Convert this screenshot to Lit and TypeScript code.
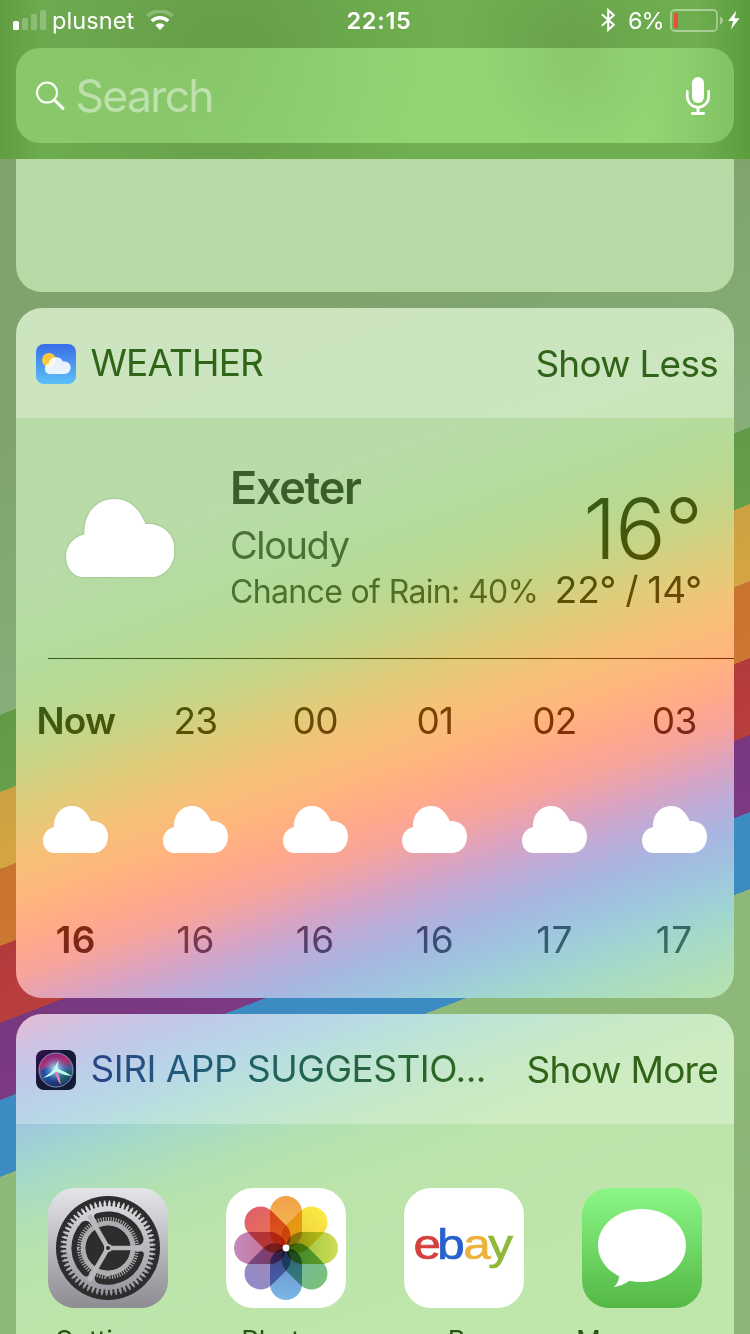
import { LitElement, html, css, svg } from 'lit';
import { customElement, property } from 'lit/decorators.js';
import { classMap } from 'lit/directives/class-map.js';

const HOURS = [
	{ hour: 'Now', temp: '16' },
	{ hour: '23', temp: '16' },
	{ hour: '00', temp: '16' },
	{ hour: '01', temp: '16' },
	{ hour: '02', temp: '17' },
	{ hour: '03', temp: '17' },
];

const PETALS = [
	['#f2a04a', '#f2c455'],
	['#fbe943', '#ecc83c'],
	['#cfdd57', '#8fb83a'],
	['#7cc07a', '#6fb5a8'],
	['#7ab8e6', '#6688c4'],
	['#8f8cc8', '#a986b4'],
	['#c28ac0', '#cf6a7c'],
	['#e2606a', '#e87a4c'],
];

const cloud = html`
	<svg class="cloud" viewBox="0 0 108.6 78.4">
		<path fill="#fff" d="M18.5 78.4C8 78.4 0 69.5 0 57.5C0 46.5 8 37.5 18.4 35.2C17.6 15 30 0 48.5 0C64 0 73.5 10.5 79.6 25C96 23.6 108.6 34.5 108.6 51C108.6 67 98 78.4 84 78.4Z"/>
	</svg>
`;

@customElement('status-bar')
class StatusBar extends LitElement {

	render() {
		return html`
			<div class="side">
				<svg class="signal" width="34" height="20" viewBox="0 0 34 20" fill="#fff">
					<rect x="0" y="11" width="6" height="9" rx="1.5"/>
					<g opacity=".24">
						<rect x="9" y="8" width="6" height="12" rx="1.5"/>
						<rect x="18" y="4" width="6" height="16" rx="1.5"/>
						<rect x="27" y="0" width="6" height="20" rx="1.5"/>
					</g>
				</svg>
				<span class="carrier">plusnet</span>
				<svg width="28" height="20" viewBox="0 0 28 20" fill="none" stroke="#fff">
					<path d="M1.4 6.2a18 18 0 0 1 25.2 0" stroke-width="3.8" opacity=".24"/>
					<path d="M5.8 11a11.8 11.8 0 0 1 16.4 0" stroke-width="3.6"/>
					<path d="M14 20l-4.6-4.8a6.6 6.6 0 0 1 9.2 0z" fill="#fff" stroke="none"/>
				</svg>
			</div>
			<span class="time">22:15</span>
			<div class="side right">
				<svg width="14" height="24" viewBox="0 0 14 24" fill="none" stroke="#fff" stroke-width="2">
					<path d="M.8 6.2l12 10.6L7.2 22V2l5.6 5.2L.8 17.8"/>
				</svg>
				<span class="percent">6%</span>
				<svg class="battery" width="53" height="23" viewBox="0 0 53 23">
					<rect x="1" y="1" width="46" height="21" rx="4" fill="none" stroke="#fff" stroke-width="1.8" opacity=".42"/>
					<path d="M50 7.4q3 1.2 3 4.1t-3 4.1z" fill="#fff" opacity=".42"/>
					<rect x="4" y="4" width="4" height="15" rx=".8" fill="#f04b3c"/>
				</svg>
				<svg width="12" height="20" viewBox="0 0 12 20" fill="#fff">
					<path d="M8.4 .4L.2 11h4.9L2.9 19.6L11.6 8.3H6.5z"/>
				</svg>
			</div>
		`;
	}

	static get styles() {
		return css`
			:host {
				display: grid;
				grid-template-columns: 1fr auto 1fr;
				align-items: center;
				height: 40px;
				padding: 0 10px 0 13px;
				color: #fff;
				font-size: 23.5px;
				line-height: 38px;
			}
			.side {
				display: flex;
				align-items: center;
			}
			.right {
				justify-content: flex-end;
			}
			.carrier {
				margin: 0 12px 0 5px;
				padding-top: 2px;
				letter-spacing: 0.1px;
			}
			.time {
				padding: 2px 0 0 5px;
				font-weight: 600;
				letter-spacing: 0.7px;
			}
			.percent {
				margin: 0 6.5px 0 13.5px;
				padding-top: 2px;
				letter-spacing: -1.1px;
			}
			.battery {
				margin: 1px 5px 0 0;
			}
		`;
	}
}

@customElement('search-field')
class SearchField extends LitElement {

	render() {
		return html`
			<svg width="30" height="30" viewBox="0 0 30 30" fill="none" stroke="#fff">
				<circle cx="11" cy="11.6" r="10" stroke-width="2"/>
				<path d="M18.2 18.8L27 27.4" stroke-width="3" stroke-linecap="round"/>
			</svg>
			<span class="placeholder">Search</span>
			<svg width="24" height="38" viewBox="0 0 24 38" fill="none" stroke="#fff">
				<rect x="6" y="0" width="12" height="26" rx="6" fill="#fff" stroke="none"/>
				<path d="M1.3 14.4v5.2a10.7 10.7 0 0 0 21.4 0v-5.2" stroke-width="2.6" stroke-linecap="round"/>
				<path d="M12 30v5" stroke-width="3"/>
				<path d="M6.4 36.5h11.2" stroke-width="2.8" stroke-linecap="round"/>
			</svg>
		`;
	}

	static get styles() {
		return css`
			:host {
				display: flex;
				align-items: center;
				height: 95px;
				box-sizing: border-box;
				padding: 0 24px 0 20px;
				border-radius: 24px;
				background:
					radial-gradient(circle at 170px -10px, rgba(120, 176, 90, 0.35), transparent 260px),
					radial-gradient(circle at 560px 10px, rgba(130, 186, 96, 0.5), transparent 100px),
					linear-gradient(90deg, #8acb6c, #92d674 50%, #92d674 88%, #82c364);
			}
			.placeholder {
				flex: 1;
				margin-left: 9.5px;
				font-size: 44.5px;
				line-height: 60px;
				letter-spacing: -1.7px;
				color: rgba(255, 255, 255, 0.45);
			}
		`;
	}
}

@customElement('widget-card')
class WidgetCard extends LitElement {
	@property() heading = '';
	@property() action = '';

	render() {
		return html`
			<div class="header">
				<slot name="icon"></slot>
				<span class="heading"><slot name="heading">${this.heading}</slot></span>
				<span class="action">${this.action}</span>
			</div>
			<slot></slot>
		`;
	}

	static get styles() {
		return css`
			:host {
				display: block;
				margin: 0 16px 16px;
				border-radius: 26px;
				overflow: hidden;
				background: var(--glass) fixed;
			}
			.header {
				display: flex;
				align-items: center;
				height: 110px;
				box-sizing: border-box;
				padding: 2px 16px 0 20px;
				background: rgba(255, 255, 255, 0.28);
				color: #2f6419;
				font-size: 37px;
				line-height: 50px;
				white-space: nowrap;
			}
			.heading {
				flex: 1;
				margin: -2px 0 0 14.5px;
				letter-spacing: -0.85px;
			}
			.action {
				letter-spacing: -0.75px;
			}
		`;
	}
}

@customElement('weather-report')
class WeatherReport extends LitElement {

	render() {
		return html`
			<div class="current">
				${cloud}
				<div class="details">
					<div class="city">Exeter</div>
					<div class="condition">Cloudy</div>
					<div class="rain">Chance of Rain: 40%</div>
				</div>
				<div class="temps">
					<div class="now">16°</div>
					<div class="range">22° / 14°</div>
				</div>
			</div>
			<div class="divider"></div>
			<div class="hours">
				${HOURS.map((h, i) => html`
					<div class=${classMap({ hour: true, bold: i === 0 })}>
						<span class="label">${h.hour}</span>
						${cloud}
						<span class="temp">${h.temp}</span>
					</div>
				`)}
			</div>
		`;
	}

	static get styles() {
		return css`
			:host {
				display: block;
				height: 580px;
			}
			.current {
				display: flex;
				height: 240px;
				box-sizing: border-box;
				padding: 40px 32px 0 49.6px;
				white-space: nowrap;
			}
			.current .cloud {
				width: 108.6px;
				height: 78.4px;
				margin-top: 40.5px;
				filter: drop-shadow(0 0 1px rgba(60, 110, 60, 0.35));
			}
			.details {
				margin-left: 55.8px;
			}
			/* text is subtracted from whatever colour lies behind it */
			.city, .condition, .rain, .now, .range, .divider, .label, .temp {
				mix-blend-mode: difference;
				color: #7e7e7e;
			}
			.city {
				font-size: 45px;
				font-weight: 600;
				line-height: 60px;
				letter-spacing: -1.3px;
			}
			.condition {
				font-size: 38px;
				line-height: 55px;
				letter-spacing: -1.4px;
				color: #6b6b6b;
			}
			.rain {
				font-size: 32px;
				line-height: 38px;
				letter-spacing: -0.65px;
				color: #6b6b6b;
			}
			.temps {
				margin: 27.5px 0 0 auto;
				text-align: right;
			}
			.now {
				font-size: 84px;
				font-weight: 280;
				line-height: 86px;
				letter-spacing: -1px;
			}
			.range {
				font-size: 37px;
				line-height: 36px;
				letter-spacing: -0.1px;
				word-spacing: -1.5px;
			}
			.divider {
				height: 1px;
				margin-left: 32px;
				background: #7e7e7e;
			}
			.hours {
				display: grid;
				grid-template-columns: repeat(6, 1fr);
				padding-top: 37px;
			}
			.hour {
				display: flex;
				flex-direction: column;
				align-items: center;
				gap: 60px;
				font-size: 37px;
				line-height: 50px;
				letter-spacing: -0.8px;
			}
			.hour .cloud {
				width: 65px;
				height: 47px;
			}
			.bold {
				font-weight: 600;
			}
			.temp {
				margin-top: 2px;
				color: #6b6b6b;
				letter-spacing: 0.3px;
			}
			.bold .temp {
				color: #7e7e7e;
			}
		`;
	}
}

const settingsIcon = svg`
	<rect width="120" height="120" fill="url(#metal)"/>
	<circle cx="60" cy="60" r="52" fill="#2d2d2d"/>
	<g fill="none" stroke="url(#metal)">
		<circle cx="60" cy="60" r="43" stroke-width="5" pathLength="120" stroke-dasharray="1.2 .8"/>
		<circle cx="60" cy="60" r="45" stroke-width="5" pathLength="120" stroke-dasharray=".7 1.3" stroke-dashoffset="-.25"/>
	</g>
	<circle cx="60" cy="60" r="42" fill="url(#metal)"/>
	${[0, 120, 240].map(a => svg`
		<g transform="rotate(${a} 60 60)">
			<path fill="#2d2d2d" d="M95.8 67.6A37 37 0 0 1 51.2 95.8Q46.4 94 46.8 89.2L60 60L91.4 63.4Q96.4 62.6 95.8 67.6Z"/>
		</g>
	`)}
	<g fill="none" stroke="#aeaeb2">
		<circle cx="60" cy="60" r="28.6" stroke-width="5" pathLength="144" stroke-dasharray=".9 1.1"/>
		<circle cx="60" cy="60" r="24.8" stroke-width="5"/>
	</g>
	<circle cx="60" cy="60" r="22.4" fill="#2d2d2d"/>
	${[0, 120, 240].map(a => svg`
		<path d="M60 60H98" transform="rotate(${a} 60 60)" stroke="#b9b9bd" stroke-width="4.6"/>
	`)}
	<circle cx="60" cy="60" r="4" fill="#b9b9bd"/>
	<circle cx="60" cy="60" r="2" fill="#2d2d2d"/>
	<defs>
		<linearGradient id="metal" gradientUnits="userSpaceOnUse" x1="0" y1="0" x2="0" y2="120">
			<stop offset="0" stop-color="#e5e4e9"/>
			<stop offset="1" stop-color="#8d8c92"/>
		</linearGradient>
	</defs>
`;

const photosIcon = svg`
	<rect width="120" height="120" fill="#fff"/>
	<defs>
		${PETALS.map(([outer, inner], i) => svg`
			<linearGradient id="petal${i}" x1="0" y1="0" x2="0" y2="1">
				<stop offset="0" stop-color=${outer}/>
				<stop offset="1" stop-color=${inner}/>
			</linearGradient>
		`)}
	</defs>
	${PETALS.map((_, i) => svg`
		<rect class="petal" x="44" y="8" width="32" height="52" rx="16" fill="url(#petal${i})" transform="rotate(${i * 45} 60 60)"/>
	`)}
	<circle cx="60" cy="60" r="3.4" fill="#fff"/>
`;

const ebayIcon = svg`
	<rect width="120" height="120" fill="#fff"/>
	<g class="ebay" transform="translate(9.4 71.2) scale(1.15 1)">
		<text x="0" fill="#d5403e" stroke="#d5403e">e</text>
		<text x="20.8" fill="#2861cc" stroke="#2861cc">b</text>
		<text x="43.4" fill="#edb23c" stroke="#edb23c">a</text>
		<text x="65.2" fill="#90b83a" stroke="#90b83a">y</text>
	</g>
`;

const messagesIcon = svg`
	<rect width="120" height="120" fill="url(#green)"/>
	<path fill="#fff" d="M60 21C84.4 21 104 37.2 104 57.4S84.4 94 60 94Q53 94 47.2 92.8Q40 98.4 31.6 99Q37 94.8 37 88.2C24 81.6 16 70.4 16 57.4C16 37.2 35.6 21 60 21Z"/>
	<defs>
		<linearGradient id="green" x1="0" y1="0" x2="0" y2="1">
			<stop offset="0" stop-color="#8bf787"/>
			<stop offset="1" stop-color="#54b844"/>
		</linearGradient>
	</defs>
`;

const APPS = [
	{ name: 'Settings', icon: settingsIcon },
	{ name: 'Photos', icon: photosIcon },
	{ name: 'eBay', icon: ebayIcon },
	{ name: 'Messages', icon: messagesIcon },
];

@customElement('app-suggestions')
class AppSuggestions extends LitElement {

	render() {
		return APPS.map(app => html`
			<div class="app">
				<svg class="icon" viewBox="0 0 120 120">${app.icon}</svg>
				<span class="name">${app.name}</span>
			</div>
		`);
	}

	static get styles() {
		return css`
			:host {
				display: flex;
				justify-content: space-between;
				height: 300px;
				box-sizing: border-box;
				padding: 64px 32px 0;
			}
			.app {
				display: flex;
				flex-direction: column;
				align-items: center;
				width: 120px;
			}
			.icon {
				flex: none;
				width: 120px;
				height: 120px;
				border-radius: 27px;
				isolation: isolate;
			}
			.petal {
				mix-blend-mode: multiply;
			}
			.ebay {
				font: 43px "Liberation Sans", Arial, sans-serif;
				stroke-width: 0.7px;
			}
			.name {
				margin-top: 12px;
				font-size: 27.4px;
				line-height: 40px;
				color: #2c5218;
				white-space: nowrap;
			}
		`;
	}
}

@customElement('app-root')
class AppRoot extends LitElement {

	render() {
		return html`
			<div class="top">
				<status-bar></status-bar>
				<search-field></search-field>
			</div>
			<div class="previous"></div>
			<widget-card heading="WEATHER" action="Show Less">
				<svg slot="icon" class="badge" viewBox="0 0 40 40">
					<defs>
						<linearGradient id="sky" x1="0" y1="0" x2="0" y2="1">
							<stop offset="0" stop-color="#3a6ee8"/>
							<stop offset="1" stop-color="#5cc0f8"/>
						</linearGradient>
					</defs>
					<rect width="40" height="40" fill="url(#sky)"/>
					<circle cx="13" cy="16" r="7" fill="#fcc93c"/>
					<path fill="#fff" fill-opacity=".87" d="M14 30A5.2 5.2 0 0 1 12.6 19.8A7.6 7.6 0 0 1 27 17.6A6.3 6.3 0 1 1 29 30Z"/>
				</svg>
				<weather-report></weather-report>
			</widget-card>
			<widget-card action="Show More">
				<svg slot="icon" class="badge" viewBox="0 0 40 40">
					<defs>
						<linearGradient id="night" x1="0" y1="0" x2="1" y2="1">
							<stop offset="0" stop-color="#32104e"/>
							<stop offset=".5" stop-color="#151a33"/>
							<stop offset="1" stop-color="#101c38"/>
						</linearGradient>
						<linearGradient id="orb" x1=".3" y1="0" x2=".5" y2="1">
							<stop offset="0" stop-color="#7d2a86"/>
							<stop offset=".3" stop-color="#b92b6c"/>
							<stop offset=".55" stop-color="#3b5d9b"/>
							<stop offset="1" stop-color="#172b66"/>
						</linearGradient>
						<radialGradient id="glow">
							<stop offset="0" stop-color="#fff"/>
							<stop offset=".3" stop-color="#8cdcf4" stop-opacity=".7"/>
							<stop offset="1" stop-color="#3a80e0" stop-opacity="0"/>
						</radialGradient>
					</defs>
					<rect width="40" height="40" fill="url(#night)"/>
					<circle cx="20" cy="20" r="17" fill="url(#orb)" stroke="#8d9fc0" stroke-width=".9"/>
					<path d="M20 20Q31 17 36 23Q30 33 25 34Z" fill="#17694f" opacity=".6"/>
					<path d="M20 20Q8 14 5 22Q8 31 14 33Z" fill="#1b479c" opacity=".75"/>
					<circle cx="19.5" cy="19" r="13" fill="url(#glow)"/>
					<path d="M20 20Q25 28 24.5 35Q21 30 18.6 20Z" fill="#f07ac4"/>
					<path d="M20 17.5Q14 24 7 28Q15 26.5 20 21.5Q28 25.5 36 26Q28 21 21.4 18.4L22.6 10L18.8 17Z" fill="#c4faf2"/>
				</svg>
				<span slot="heading" class="tinted">SIRI APP SUGGESTIO...</span>
				<app-suggestions></app-suggestions>
			</widget-card>
		`;
	}

	static get styles() {
		return css`
			:host {
				/* blurred version of the wallpaper stripes, seen through the cards */
				--glass: linear-gradient(160.5deg,
					#b7daa7 0, #b8dba7 560px, #b5dc9c 635px, #b8d993 680px, #c9d485 728px,
					#e0cc7a 770px, #f6c178 815px, #ffb67c 855px, #ffa98a 895px, #f7a49c 927px,
					#dba3c0 962px, #bfabd8 994px, #a7b6e1 1027px, #9ec6df 1064px, #a0d5d1 1100px,
					#a8dcc2 1130px, #b3e1b2 1170px, #bbe4aa 1220px, #bfe6ab 1400px);
				display: block;
				height: 1334px;
				overflow: hidden;
				font-family: Inter, "Liberation Sans", sans-serif;
				background: linear-gradient(159deg,
					#7fa26c 0, #80a36c 400px, #87ae79 667.5px,
					#629b48 667.5px, #659f4b 739.4px,
					#cda040 739.4px, #d4a643 811.3px,
					#c87330 811.3px, #cb7632 883.2px,
					#b33a3b 883.2px, #b93f3d 955px,
					#78387f 955px, #7b3a82 1027px,
					#3c8bc3 1027px, #3c8bc3 1098.8px,
					#8eb978 1098.8px, #8bb476);
			}
			.top {
				height: 159px;
				box-sizing: border-box;
				padding: 0 16px;
				background:
					radial-gradient(circle at 230px 60px, rgba(96, 148, 68, 0.7), transparent 210px),
					radial-gradient(circle at 570px 50px, rgba(100, 152, 72, 0.6), transparent 110px),
					linear-gradient(90deg, #5f9d40, #6eac50 6%, #70b050 50%, #6eae4f 93%, #5b9c3d);
			}
			status-bar {
				margin: 0 -16px 8px;
			}
			.previous {
				height: 133px;
				margin: 0 16px 16px;
				border-radius: 0 0 26px 26px;
				background: #b7d9a6;
			}
			.badge {
				flex: none;
				width: 40px;
				height: 40px;
				border-radius: 8px;
			}
			.tinted {
				color: transparent;
				letter-spacing: -0.5px;
				background: linear-gradient(90deg, #294487, #22597d 20%, #215f6b 37%, #23644b 60%, #29662e 80%, #2d6722);
				-webkit-background-clip: text;
				background-clip: text;
			}
		`;
	}
}
